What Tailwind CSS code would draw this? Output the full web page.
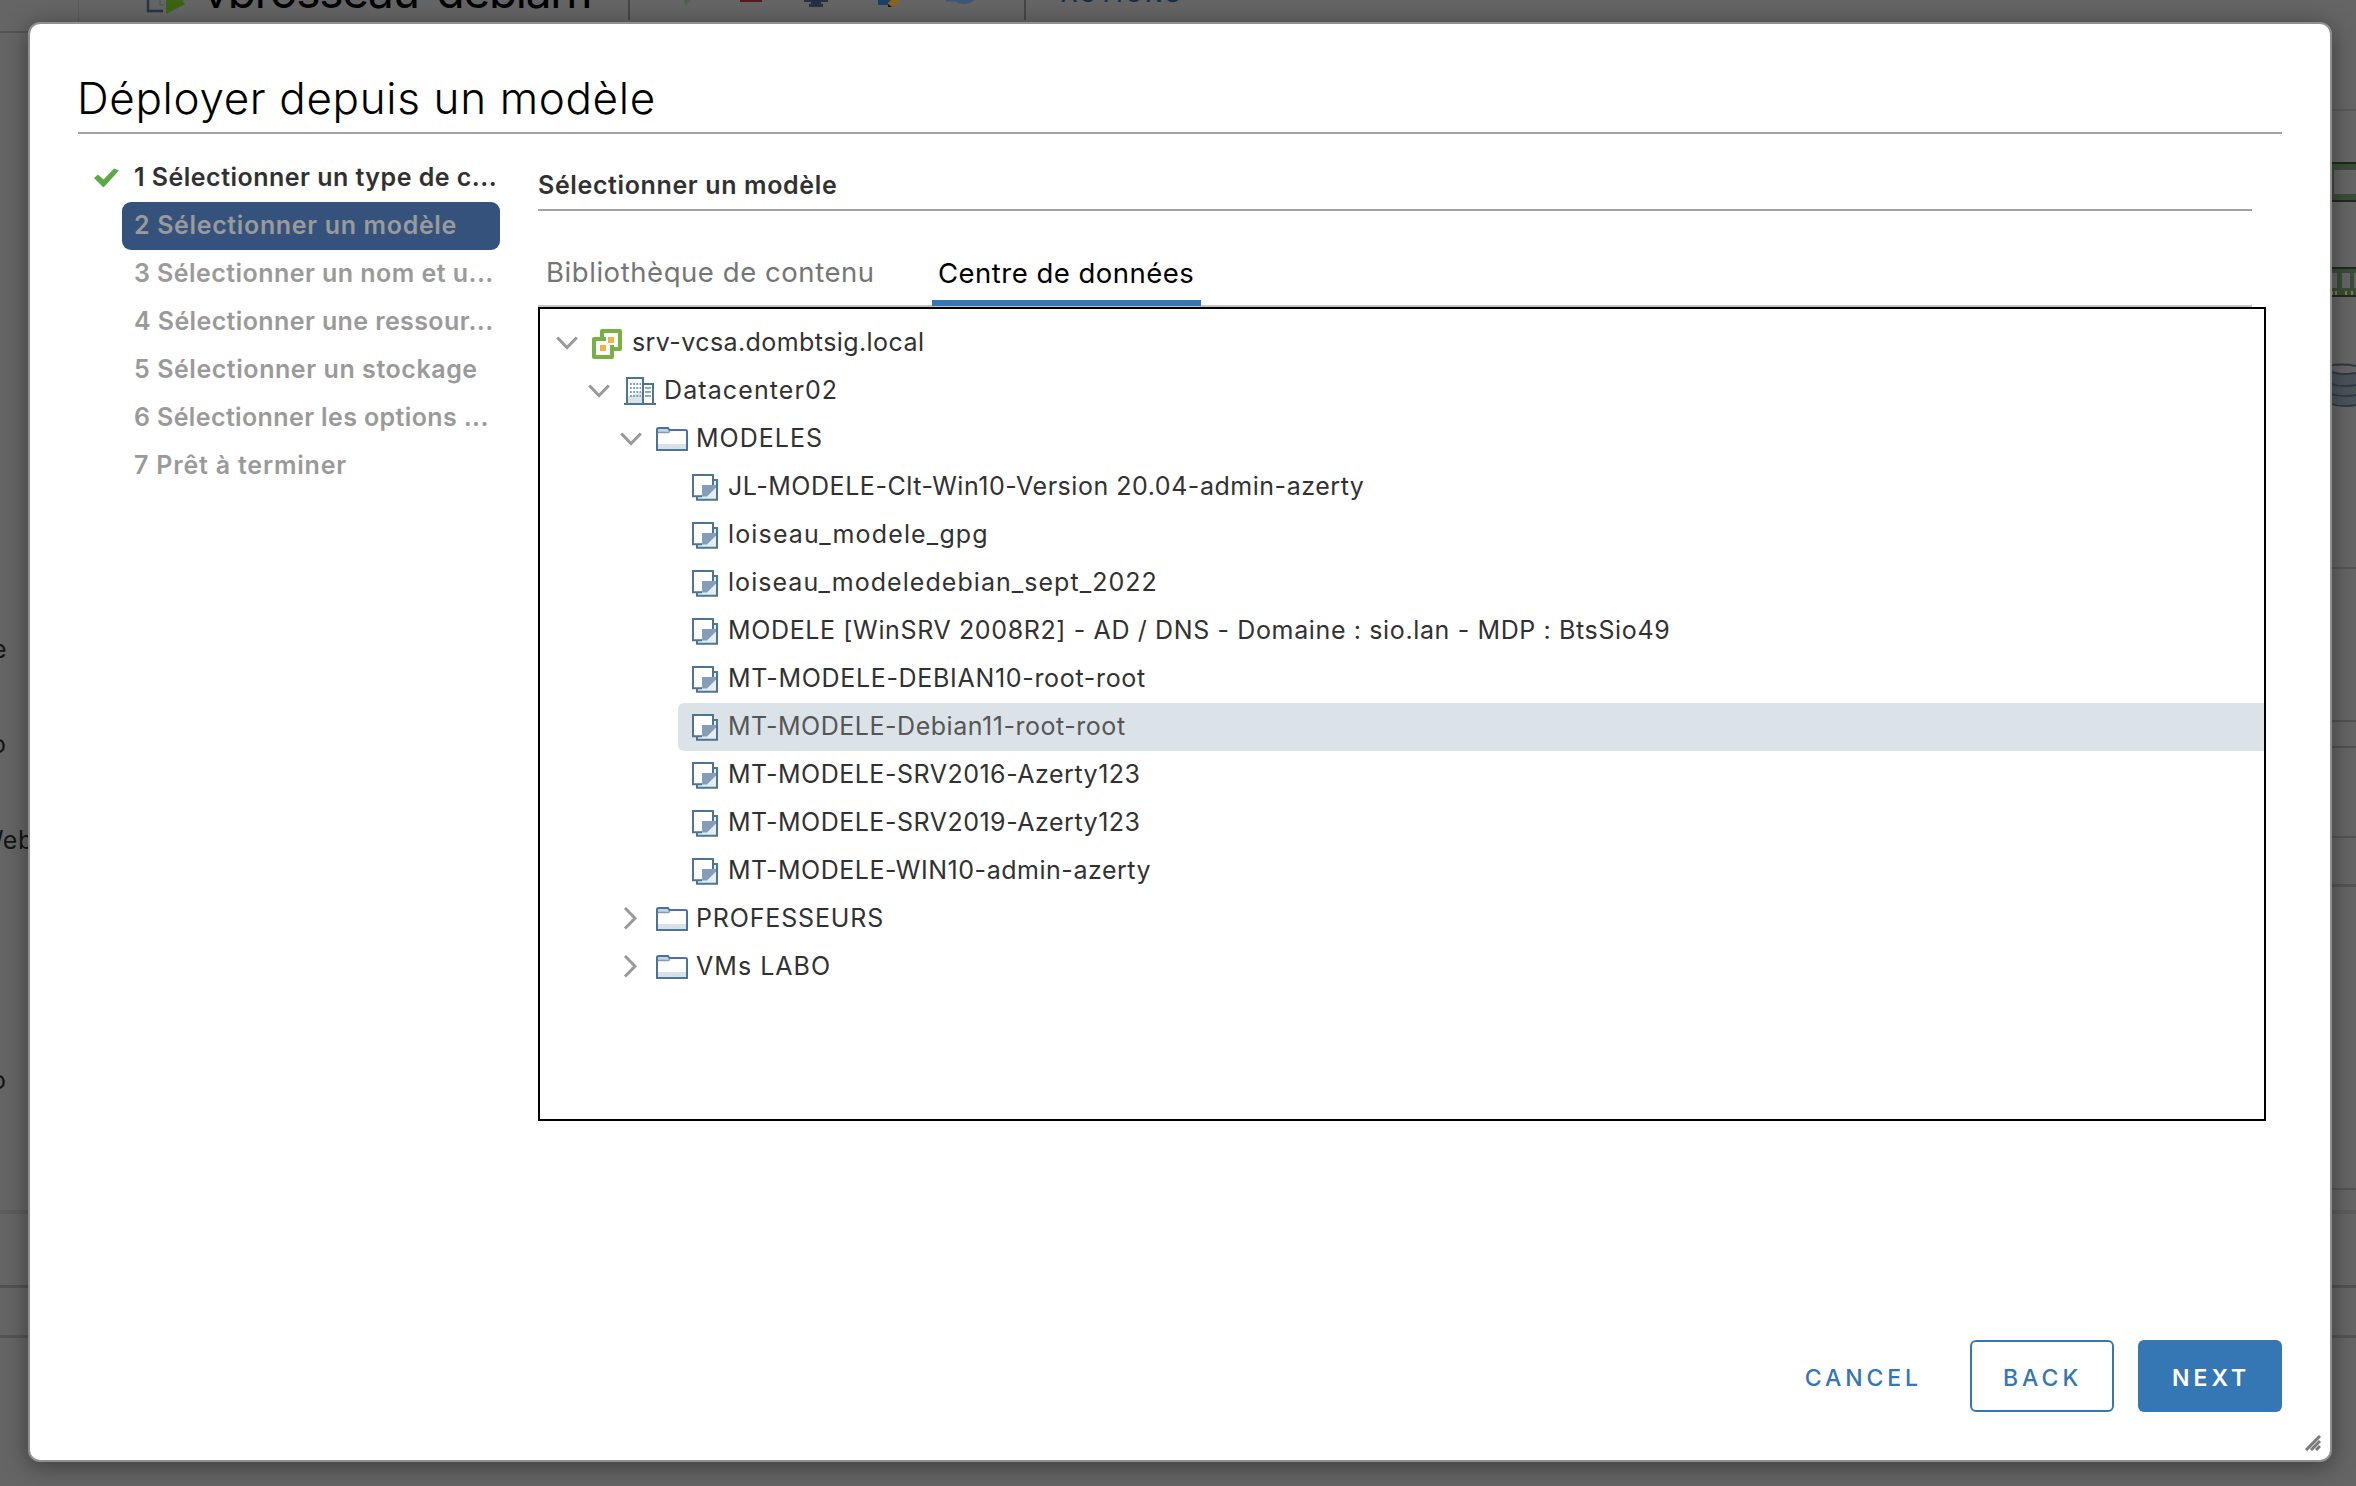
<!DOCTYPE html>
<html lang="fr">
<head>
<meta charset="utf-8">
<title>Déployer depuis un modèle</title>
<script src="https://cdn.jsdelivr.net/npm/@tailwindcss/browser@4"></script>
</head>
<body class="relative h-screen w-full overflow-hidden bg-[#656565] font-['Inter',sans-serif] text-[#313131]">

<svg class="hidden">
  <symbol id="down" viewBox="0 0 22 32"><path d="M1.2 10.5 11 20.5 20.8 10.5" fill="none" stroke="#9a9a9a" stroke-width="3"/></symbol>
  <symbol id="right" viewBox="0 0 22 32"><path d="M5 5 15 15.3 5 25.5" fill="none" stroke="#9a9a9a" stroke-width="3"/></symbol>
  <symbol id="vcenter" viewBox="0 0 32 32">
    <path d="M10 4H28V22H20V30H2V12H10Z" fill="#fff" stroke="#78b042" stroke-width="4" stroke-linejoin="round"/>
    <path d="M10 12H14M20 18V22" stroke="#78b042" stroke-width="4"/>
    <path d="M16 10h6v6h-6zM8 18h6v6H8z" fill="#f2b346"/>
  </symbol>
  <symbol id="datacenter" viewBox="0 0 32 32">
    <path d="M3 3H19V29H3Z" fill="#fff"/><path d="M3 22 19 16V29H3Z" fill="#d9e4ea"/>
    <path d="M3 29V3H19V29M20 9H29V29" fill="none" stroke="#4d7490" stroke-width="2"/>
    <path d="M0 29H32" stroke="#4d7490" stroke-width="2"/>
    <path d="M6 9H17M6 13H17M6 17H17M6 21H17" stroke="#7f9db2" stroke-width="1.8" stroke-dasharray="1.8 1.4"/>
    <path d="M21 13H27M21 17H27M21 21H27" stroke="#6f91a9" stroke-width="1.6"/>
  </symbol>
  <symbol id="folder" viewBox="0 0 32 32">
    <path d="M1 21H31V27H1Z" fill="#d9e1e8"/>
    <path d="M1 8V6Q1 5 2.5 5H12L13.5 7 12 9H1Z" fill="#bdd6e6"/>
    <path d="M1 27V6.5Q1 5 2.5 5H12L13.5 7H29.5Q31 7 31 8.5V27Z" fill="none" stroke="#4d7490" stroke-width="2"/>
    <path d="M2 9.5H12.5L14 8" fill="none" stroke="#7d9fb7" stroke-width="1.6"/>
  </symbol>
  <symbol id="template" viewBox="0 0 32 32">
    <path d="M9 9H29V28.8H9Z" fill="#e6edf1" stroke="#4d7490" stroke-width="2"/>
    <path d="M5 4H25V15L16 25H5Z" fill="#fff"/>
    <path d="M14 14H28V16.5L19 25.5H14Z" fill="#839eb6"/>
    <path d="M14 25.2H5V4H25V14" fill="none" stroke="#4d7490" stroke-width="2"/>
  </symbol>
</svg>

<!-- Page behind the dialog -->
<div class="absolute inset-0">
  <div class="absolute left-0 top-[31px] h-[2px] w-[78px] bg-[#545454]"></div>
  <div class="absolute left-[78px] top-0 h-[30px] w-px bg-[#5c5c5c]"></div>
  <svg class="absolute left-[144px] top-0" width="44" height="16"><path d="M4 0V11H19" fill="none" stroke="#243746" stroke-width="2.4"/><path d="M16 0V5H20" fill="none" stroke="#4b5a66" stroke-width="1.5"/><path d="M22 0H38L41 4 22 14Z" fill="#3c6414"/></svg>
  <div class="absolute left-[203px] top-[-38px] whitespace-nowrap text-[46px] leading-[58px] tracking-[-1.3px] text-black">vbrosseau-debian1</div>
  <div class="absolute left-[628px] top-0 h-5 w-[2px] bg-[#464646]"></div>
  <div class="absolute left-[1024px] top-0 h-5 w-[2px] bg-[#464646]"></div>
  <svg class="absolute left-[680px] top-0" width="300" height="10">
    <path d="M4 0H11L5 6Z" fill="#52634a"/>
    <path d="M60 0H82V2H60Z" fill="#551a1e"/>
    <path d="M124 0H148V2H141V4H143V7H129V4H131V2H124Z" fill="#29303f"/>
    <path d="M198 0H214V5H198Z" fill="#1b416b"/><path d="M211 0H221L213 7H208V3Z" fill="#8a641f"/><path d="M208 4 212 7H208Z" fill="#111"/>
    <path d="M266 0H294Q290 4 284 4Q278 4 276 1.5H266Z" fill="#3d567a"/>
  </svg>
  <div class="absolute left-[1061px] top-[-20px] whitespace-nowrap text-[23px] font-medium leading-[28px] tracking-[2.6px] text-[#152f47]">ACTIONS</div>

  <div class="absolute left-[-8px] top-[633px] text-[25px] leading-8 text-[#151515]">e</div>
  <div class="absolute left-[-9px] top-[728px] text-[25px] leading-8 text-[#151515]">o</div>
  <div class="absolute left-[-21px] top-[824px] text-[25px] leading-8 tracking-[0.5px] text-[#151515]">Web</div>
  <div class="absolute left-[-9px] top-[1064px] text-[25px] leading-8 text-[#151515]">o</div>

  <div class="absolute left-0 top-[1210px] h-1 w-full bg-[#5d5d5d]"></div>
  <div class="absolute left-0 top-[1285px] h-[3px] w-full bg-[#525252]"></div>
  <div class="absolute left-0 top-[1335px] h-[3px] w-full bg-[#555]"></div>
  <div class="absolute right-0 top-[109px] h-[2px] w-10 bg-[#5a5a5a]"></div>
  <div class="absolute right-0 top-[567px] h-[2px] w-10 bg-[#555]"></div>
  <div class="absolute right-0 top-[720px] h-[2px] w-10 bg-[#525252]"></div>
  <div class="absolute right-0 top-[746px] h-[2px] w-10 bg-[#525252]"></div>
  <div class="absolute right-0 top-[836px] h-[2px] w-10 bg-[#555]"></div>
  <div class="absolute right-0 top-[884px] h-[3px] w-10 bg-[#555]"></div>
  <div class="absolute right-0 top-[1188px] h-[2px] w-10 bg-[#555]"></div>
  <svg class="absolute right-0 top-[160px]" width="28" height="250">
    <path d="M0 2H28V42H0Z" fill="#3a4d38"/><path d="M6 10H28V34H6Z" fill="#656565"/><path d="M0 3H28M0 41H28" stroke="#1d2b1c" stroke-width="2"/>
    <path d="M0 107H28V137H0Z" fill="#3a4d38"/><path d="M0 113H9V128H0ZM14 113H22V128H14ZM26 113H28V128H26Z" fill="#656565"/><path d="M0 108H28M0 136H28" stroke="#1d2b1c" stroke-width="2"/><path d="M4 131V135M8 131V135M18 131V135M24 131V135" stroke="#8a7a40" stroke-width="2"/>
    <path d="M0 208Q14 216 28 212V246Q14 248 0 244Z" fill="#4a5459"/>
    <path d="M0 206Q14 203 28 206M0 211Q12 216 28 213M0 223Q14 228 28 225M0 233Q14 238 28 235M0 243Q14 248 28 245" fill="none" stroke="#2c3a45" stroke-width="1.8"/>
  </svg>
</div>

<!-- Dialog -->
<main class="relative ml-[28px] mt-[22px] flex h-[1440px] w-[2304px] flex-col rounded-[12px] border-2 border-[#909090] bg-white px-12 shadow-[0_4px_24px_rgba(0,0,0,0.42)]">
  <h1 class="h-[110px] border-b-2 border-[#a3a3a3] pl-[2px] pt-[47px] text-[44px] font-light leading-[54px] tracking-[0.65px] text-black -indent-[3px]">Déployer depuis un modèle</h1>

  <div class="flex">
    <nav class="w-[460px] pt-[20px] text-[25px] font-semibold leading-[47px] text-[#9a9a9a]">
      <div class="flex h-12 items-center text-[#313131]">
        <svg class="ml-4 mr-3 h-5 w-[25px]" viewBox="0 0 25 20"><path d="M0 10 4 6.5 9.5 11.5 20 .5 25 2.5 9.5 19.5Z" fill="#5ea848"/></svg>
        <div class="ml-[3px] h-12 whitespace-nowrap tracking-[0.48px]">1 Sélectionner un type de c...</div>
      </div>
      <div class="ml-[44px] h-12 w-[378px] whitespace-nowrap rounded-[9px] bg-[#35527d] pl-[12px] tracking-[0.65px]">2 Sélectionner un modèle</div>
      <div class="ml-[44px] h-12 whitespace-nowrap pl-[12px] tracking-[0.45px]">3 Sélectionner un nom et u...</div>
      <div class="ml-[44px] h-12 whitespace-nowrap pl-[12px] tracking-[0.39px]">4 Sélectionner une ressour...</div>
      <div class="ml-[44px] h-12 whitespace-nowrap pl-[12px] tracking-[0.56px]">5 Sélectionner un stockage</div>
      <div class="ml-[44px] h-12 whitespace-nowrap pl-[12px] tracking-[0.38px]">6 Sélectionner les options ...</div>
      <div class="ml-[44px] h-12 whitespace-nowrap pl-[12px] tracking-[0.8px]">7 Prêt à terminer</div>
    </nav>

    <section class="w-[1728px]">
      <h2 class="h-[77px] w-[1714px] border-b-2 border-[#a3a3a3] pt-[33px] text-[25px] font-semibold leading-[36px] tracking-[0.63px]">Sélectionner un modèle</h2>
      <div class="flex h-[96px] w-[1714px] items-end border-b-2 border-[#c4c4c4] text-[27.5px] leading-[30px]">
        <div class="h-[62px] w-[394px] pl-[8px] pt-[14px] tracking-[0.56px] text-[#757575]">Bibliothèque de contenu</div>
        <div class="-mb-[1px] h-[63px] w-[269px] border-b-[6px] border-[#3576b4] pl-[6px] pt-[15px] tracking-[0.49px] text-black">Centre de données</div>
      </div>

      <div class="h-[814px] border-2 border-black pt-[10px] text-[25px] leading-[46px] whitespace-nowrap">
        <div class="flex h-12 pl-4"><svg class="mr-[14px] mt-2 h-8 w-[22px]"><use href="#down"/></svg><svg class="mr-2 mt-2 size-8"><use href="#vcenter"/></svg><span class="tracking-[0.42px]">srv-vcsa.dombtsig.local</span></div>
        <div class="flex h-12 pl-12"><svg class="mr-[14px] mt-2 h-8 w-[22px]"><use href="#down"/></svg><svg class="mr-2 mt-2 size-8"><use href="#datacenter"/></svg><span class="tracking-[1.1px]">Datacenter02</span></div>
        <div class="flex h-12 pl-20"><svg class="mr-[14px] mt-2 h-8 w-[22px]"><use href="#down"/></svg><svg class="mr-2 mt-2 size-8"><use href="#folder"/></svg><span class="tracking-[1px]">MODELES</span></div>
        <div class="ml-[138px] flex h-12 pl-[10px]"><svg class="mr-2 mt-2 size-8"><use href="#template"/></svg><span class="tracking-[0.535px]">JL-MODELE-Clt-Win10-Version 20.04-admin-azerty</span></div>
        <div class="ml-[138px] flex h-12 pl-[10px]"><svg class="mr-2 mt-2 size-8"><use href="#template"/></svg><span class="tracking-[1.15px]">loiseau_modele_gpg</span></div>
        <div class="ml-[138px] flex h-12 pl-[10px]"><svg class="mr-2 mt-2 size-8"><use href="#template"/></svg><span class="tracking-[1.05px]">loiseau_modeledebian_sept_2022</span></div>
        <div class="ml-[138px] flex h-12 pl-[10px]"><svg class="mr-2 mt-2 size-8"><use href="#template"/></svg><span class="tracking-[0.63px]">MODELE [WinSRV 2008R2] - AD / DNS - Domaine : sio.lan - MDP : BtsSio49</span></div>
        <div class="ml-[138px] flex h-12 pl-[10px]"><svg class="mr-2 mt-2 size-8"><use href="#template"/></svg><span class="tracking-[0.68px]">MT-MODELE-DEBIAN10-root-root</span></div>
        <div class="ml-[138px] flex h-12 rounded-l-[6px] bg-[#dbe3e8] pl-[10px] text-[#565656]"><svg class="mr-2 mt-2 size-8"><use href="#template"/></svg><span class="tracking-[0.53px]">MT-MODELE-Debian11-root-root</span></div>
        <div class="ml-[138px] flex h-12 pl-[10px]"><svg class="mr-2 mt-2 size-8"><use href="#template"/></svg><span class="tracking-[0.51px]">MT-MODELE-SRV2016-Azerty123</span></div>
        <div class="ml-[138px] flex h-12 pl-[10px]"><svg class="mr-2 mt-2 size-8"><use href="#template"/></svg><span class="tracking-[0.51px]">MT-MODELE-SRV2019-Azerty123</span></div>
        <div class="ml-[138px] flex h-12 pl-[10px]"><svg class="mr-2 mt-2 size-8"><use href="#template"/></svg><span class="tracking-[0.53px]">MT-MODELE-WIN10-admin-azerty</span></div>
        <div class="flex h-12 pl-20"><svg class="mr-[14px] mt-2 h-8 w-[22px]"><use href="#right"/></svg><svg class="mr-2 mt-2 size-8"><use href="#folder"/></svg><span class="tracking-[0.85px]">PROFESSEURS</span></div>
        <div class="flex h-12 pl-20"><svg class="mr-[14px] mt-2 h-8 w-[22px]"><use href="#right"/></svg><svg class="mr-2 mt-2 size-8"><use href="#folder"/></svg><span class="tracking-[1.03px]">VMs LABO</span></div>
      </div>
    </section>
  </div>

  <footer class="mt-auto mb-12 flex h-[72px] justify-end text-[23px] font-medium leading-[76px] text-[#3576b4]">
    <button class="mr-[48px] tracking-[3.9px]">CANCEL</button>
    <button class="mr-6 w-36 rounded-[6px] border-2 border-[#3576b4] pl-[31px] text-left leading-[72px] tracking-[3.99px]">BACK</button>
    <button class="w-36 rounded-[6px] bg-[#3576b4] pl-[34px] text-left font-semibold tracking-[4px] text-white">NEXT</button>
  </footer>

  <svg class="absolute bottom-[9px] right-[9px]" width="16" height="16" viewBox="0 0 16 16"><path d="M1 15 15 1M6 15 15 6M11 15 15 11" stroke="#7a7a7a" stroke-width="3"/></svg>
</main>
</body>
</html>
